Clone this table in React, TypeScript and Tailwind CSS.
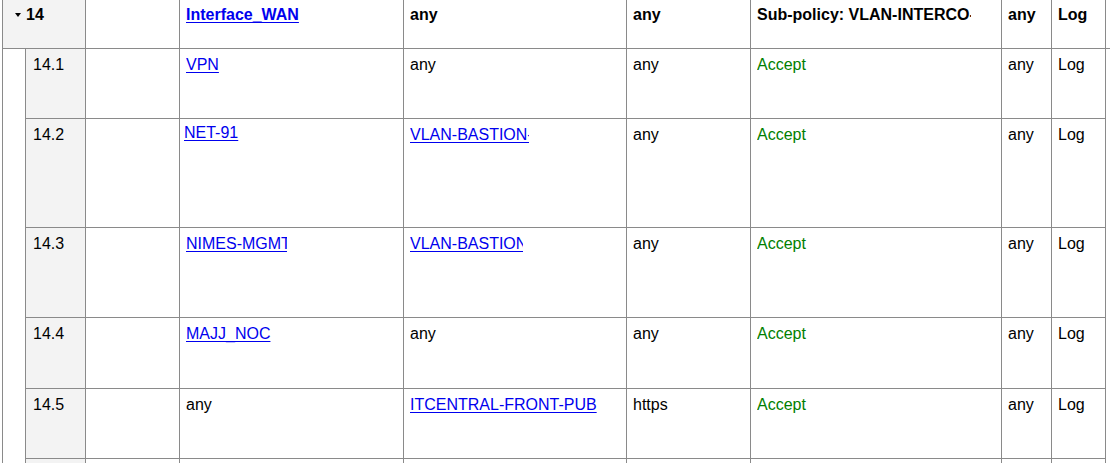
import React from 'react';

type Cell = { text?: string; link?: boolean; green?: boolean; clip?: number; shift?: boolean };

interface RuleRow {
  id: string;
  h: number;
  cells: Cell[];
}

// widths include the 1px right border
const COLS = [94, 224, 223, 124, 251, 50, 54];

const ROWS: RuleRow[] = [
  {
    id: '14.1',
    h: 70,
    cells: [{}, { text: 'VPN', link: true }, { text: 'any' }, { text: 'any' }, { text: 'Accept', green: true }, { text: 'any' }, { text: 'Log' }],
  },
  {
    id: '14.2',
    h: 109,
    cells: [
      {},
      { text: 'NET-91', link: true, shift: true },
      { text: 'VLAN-BASTION-ADM', link: true, clip: 119 },
      { text: 'any' },
      { text: 'Accept', green: true },
      { text: 'any' },
      { text: 'Log' },
    ],
  },
  {
    id: '14.3',
    h: 90,
    cells: [
      {},
      { text: 'NIMES-MGMT', link: true, clip: 101 },
      { text: 'VLAN-BASTION', link: true, clip: 113 },
      { text: 'any' },
      { text: 'Accept', green: true },
      { text: 'any' },
      { text: 'Log' },
    ],
  },
  {
    id: '14.4',
    h: 71,
    cells: [{}, { text: 'MAJJ_NOC', link: true }, { text: 'any' }, { text: 'any' }, { text: 'Accept', green: true }, { text: 'any' }, { text: 'Log' }],
  },
  {
    id: '14.5',
    h: 70,
    cells: [
      {},
      { text: 'any' },
      { text: 'ITCENTRAL-FRONT-PUB', link: true },
      { text: 'https' },
      { text: 'Accept', green: true },
      { text: 'any' },
      { text: 'Log' },
    ],
  },
  { id: '', h: 70, cells: [{}, {}, {}, {}, {}, {}, {}] },
];

function CellBody({ cell }: { cell: Cell }) {
  if (!cell.text) return null;
  const cls = cell.link
    ? 'text-[#0000ee] underline underline-offset-[2px]'
    : cell.green
      ? 'text-[#008000]'
      : 'text-black';
  return (
    <span
      className={`block overflow-hidden whitespace-nowrap ${cls} ${cell.shift ? '-ml-[2px] -mt-[2px]' : ''}`}
      style={cell.clip ? { width: cell.clip } : undefined}
    >
      {cell.text}
    </span>
  );
}

export default function App() {
  const header: Cell[] = [
    {},
    { text: 'Interface_WAN', link: true },
    { text: 'any' },
    { text: 'any' },
    { text: 'Sub-policy: VLAN-INTERCO-DMZ', clip: 214 },
    { text: 'any' },
    { text: 'Log' },
  ];

  return (
    <div className="w-[1110px] h-[463px] overflow-hidden bg-white font-['Liberation_Sans',Arial,sans-serif] text-[16px] leading-[18px] text-black">
      <div className="ml-[2px] w-[1200px] border-l border-[#8a8a8a]">
        {/* group header */}
        <div className="flex h-[49px] border-b border-[#8a8a8a] font-bold">
          <div className="w-[83px] shrink-0 border-r border-[#8a8a8a] bg-[#f3f3f3] pl-[12px] pt-[6px] flex items-start">
            <svg width="6" height="4" viewBox="0 0 6 4" className="mt-[7px] mr-[5px]">
              <path d="M0 0 H6 L3 4 Z" fill="#000" />
            </svg>
            <span>14</span>
          </div>
          {header.map((c, i) => (
            <div
              key={i}
              className="shrink-0 border-r border-[#8a8a8a] pl-[6px] pt-[6px]"
              style={{ width: COLS[i] }}
            >
              <CellBody cell={c} />
            </div>
          ))}
        </div>

        {/* child rules */}
        <div className="flex">
          <div className="w-[22px] shrink-0" />
          <div className="border-l border-[#8a8a8a]">
            {ROWS.map((r, ri) => (
              <div key={ri} className="flex border-b border-[#8a8a8a]" style={{ height: r.h }}>
                <div className="w-[60px] shrink-0 border-r border-[#8a8a8a] bg-[#f3f3f3] pl-[7px] pt-[7px]">
                  {r.id}
                </div>
                {r.cells.map((c, i) => (
                  <div
                    key={i}
                    className="shrink-0 border-r border-[#8a8a8a] pl-[6px] pt-[7px]"
                    style={{ width: COLS[i] }}
                  >
                    <CellBody cell={c} />
                  </div>
                ))}
              </div>
            ))}
          </div>
        </div>
      </div>
    </div>
  );
}
